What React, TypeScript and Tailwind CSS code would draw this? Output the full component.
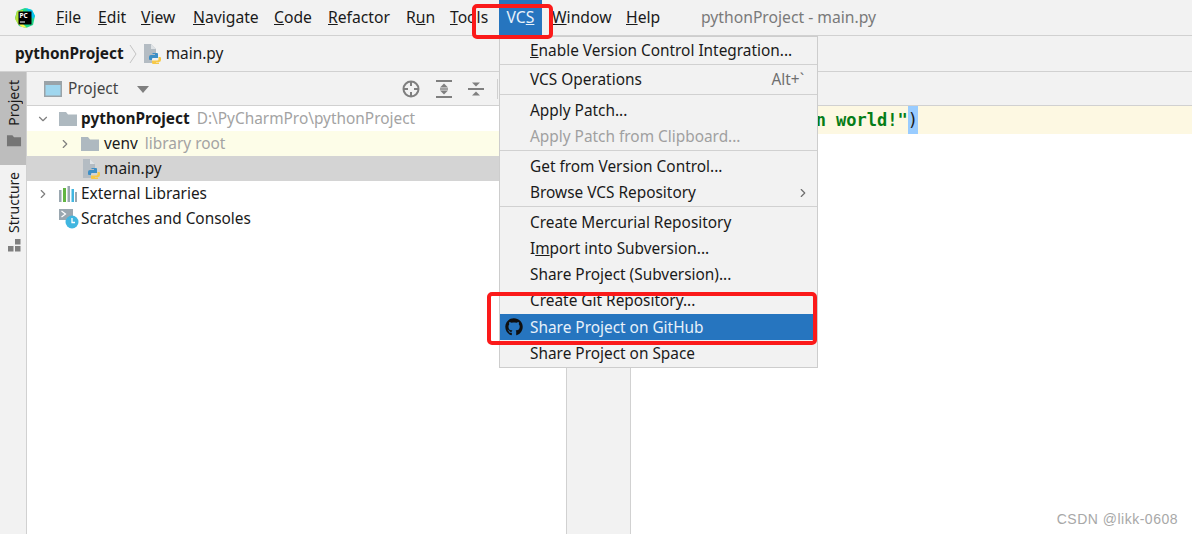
import { ChevronDown, ChevronRight } from "lucide-react";
import { FaGithub } from "react-icons/fa";

const FONT = "font-['Noto_Sans','Open_Sans',sans-serif]";

function FolderIcon({ className = "", fill = "#aeb9c0" }: { className?: string; fill?: string }) {
  return (
    <svg width="18" height="15" viewBox="0 0 18 15" className={className}>
      <path d="M0 1h7l2 2.500h9V15H0z" fill={fill} />
    </svg>
  );
}

function PyFileIcon() {
  return (
    <svg width="18" height="20" viewBox="0 0 18 20">
      <path d="M0 0h7l5 5v6H8v8H0z" fill="#b4bcc3" />
      <path d="M7 0v5h5z" fill="#dfe3e6" />
      <path d="M9 9h4a1 1 0 0 1 1 1v4H9a1 1 0 0 0-1 1v1H6a1 1 0 0 1-1-1v-2a2 2 0 0 1 2-2h4v-1H8z" fill="#3d8fc6" />
      <path d="M14.500 13h1.500a1 1 0 0 1 1 1v2a2 2 0 0 1-2 2h-3v.500h3V20H9a1 1 0 0 1-1-1v-2.500h5a1.500 1.500 0 0 0 1.500-1.500z" fill="#f7c948" />
    </svg>
  );
}

function PyCharmLogo() {
  return (
    <svg width="22" height="22" viewBox="0 0 22 22">
      <path d="M3 4l8-3 7 2 3 6-2 9-7 3-7-2-4-8z" fill="#21d789" />
      <path d="M1 12l2-8 6-1-1 16-4-2z" fill="#b4e33d" />
      <path d="M12 1l6 2 3 6-2 3z" fill="#07c3f2" />
      <path d="M4 17l4 3 5 1-5-5z" fill="#fcf84a" />
      <rect x="4.500" y="4.500" width="13" height="13" fill="#000" />
      <text x="5.500" y="11" fontSize="6.500" fontWeight="700" fill="#fff" fontFamily="Noto Sans, sans-serif">PC</text>
      <rect x="6" y="14.500" width="5" height="1" fill="#fff" />
    </svg>
  );
}

function ProjectWindowIcon() {
  return (
    <svg width="18" height="16" viewBox="0 0 18 16">
      <rect x="0" y="0" width="18" height="16" fill="#9aa3a8" />
      <rect x="1.500" y="4" width="15" height="10.500" fill="#9fd6ee" />
    </svg>
  );
}

function LocateIcon() {
  return (
    <svg width="18" height="18" viewBox="0 0 18 18" fill="none" stroke="#7f7f7f" strokeWidth="2">
      <circle cx="9" cy="9" r="7.500" />
      <path d="M9 1v5M9 12v5M1 9h5M12 9h5" />
    </svg>
  );
}

function ExpandIcon() {
  return (
    <svg width="16" height="18" viewBox="0 0 16 18" fill="#7f7f7f">
      <rect x="0" y="0" width="16" height="2" />
      <rect x="0" y="16" width="16" height="2" />
      <path d="M8 3.500l4 4H4zM8 14.500l-4-4h8z" />
      <rect x="4" y="8.300" width="8" height="1.400" />
    </svg>
  );
}

function CollapseIcon() {
  return (
    <svg width="16" height="18" viewBox="0 0 16 18" fill="#7f7f7f">
      <rect x="0" y="8" width="16" height="2" />
      <path d="M8 6.500l-4-4h8zM8 11.500l4 4H4z" />
    </svg>
  );
}

function LibrariesIcon() {
  return (
    <svg width="18" height="16" viewBox="0 0 18 16">
      <rect x="0" y="4" width="2.500" height="12" fill="#9aa7b0" />
      <rect x="4" y="2" width="3" height="14" fill="#62b543" />
      <rect x="8.500" y="0" width="2.500" height="16" fill="#9aa7b0" />
      <rect x="12.500" y="3" width="2.500" height="13" fill="#40b6e0" />
      <rect x="16" y="6" width="2" height="10" fill="#9aa7b0" />
    </svg>
  );
}

function ScratchesIcon() {
  return (
    <svg width="20" height="20" viewBox="0 0 20 20">
      <rect x="0" y="0" width="14" height="11" fill="#9aa7b0" />
      <path d="M2.500 2l4 3-4 3" fill="none" stroke="#fff" strokeWidth="1.200" />
      <circle cx="13" cy="13" r="6.500" fill="#40b6e0" />
      <path d="M13 9v4.500h3" fill="none" stroke="#fff" strokeWidth="1.300" />
    </svg>
  );
}

const MENU_BAR = [
  { pre: "", key: "F", post: "ile", w: "w-[42px]" },
  { pre: "", key: "E", post: "dit", w: "w-[43px]" },
  { pre: "", key: "V", post: "iew", w: "w-[52px]" },
  { pre: "", key: "N", post: "avigate", w: "w-[81px]" },
  { pre: "", key: "C", post: "ode", w: "w-[54px]" },
  { pre: "", key: "R", post: "efactor", w: "w-[78px]" },
  { pre: "R", key: "u", post: "n", w: "w-[44px]" },
  { pre: "", key: "T", post: "ools", w: "w-[49px]" },
];

type Item = { pre?: string; key?: string; post: string; muted?: boolean; shortcut?: string; arrow?: boolean; active?: boolean; h?: string };

const MENU_GROUPS: { cls: string; items: Item[] }[] = [
  { cls: "", items: [{ key: "E", post: "nable Version Control Integration..." }] },
  { cls: "pt-[2px] border-t", items: [{ post: "VCS Operations", shortcut: "Alt+`" }] },
  {
    cls: "mt-[1px] pt-[3px] border-t",
    items: [{ post: "Apply Patch..." }, { post: "Apply Patch from Clipboard...", muted: true }],
  },
  {
    cls: "pt-[2px] border-t",
    items: [{ post: "Get from Version Control...", h: "h-[27px]" }, { post: "Browse VCS Repository", arrow: true }],
  },
  {
    cls: "pt-[3px] border-t",
    items: [
      { post: "Create Mercurial Repository" },
      { pre: "I", key: "m", post: "port into Subversion..." },
      { post: "Share Project (Subversion)..." },
      { post: "Create Git Repository..." },
      { post: "Share Project on GitHub", active: true, h: "h-[26px] pt-[2px]" },
      { post: "Share Project on Space", h: "h-[26px] pt-[2px]" },
    ],
  },
];

function VcsMenu() {
  return (
    <div className="absolute left-[499px] top-[36px] z-10 w-[319px] h-[332px] pt-[1px] bg-[#f2f2f2] border border-[#cdcdcd] text-[15.400px] text-[#1a1a1a]">
      {MENU_GROUPS.map((group, g) => (
        <div key={g} className={`border-[#d1d1d1] ${group.cls}`}>
          {group.items.map((it) => (
            <div
              key={it.post}
              className={`relative ${it.h ?? "h-[26px]"} flex items-center justify-between pl-[30px] pr-[7px] leading-none ${
                it.active ? "bg-[#2675bf] text-[#e8f1fa]" : it.muted ? "text-[#a0a0a0]" : ""
              }`}
            >
              {it.active && <FaGithub className="absolute left-[5px] top-[4px] text-[#0f0f0f]" size={18} />}
              <span>
                {it.pre}
                {it.key && <span className="underline">{it.key}</span>}
                {it.post}
              </span>
              {it.shortcut && <span className="text-[#6e6e6e] pr-[6px]">{it.shortcut}</span>}
              {it.arrow && <ChevronRight size={14} className="text-[#6e6e6e]" />}
            </div>
          ))}
        </div>
      ))}
    </div>
  );
}

export default function App() {
  return (
    <div className={`relative w-[1192px] h-[534px] overflow-hidden bg-white flex flex-col ${FONT} text-[15.400px] text-[#1a1a1a]`}>
      {/* Title bar */}
      <div className="h-[36px] shrink-0 bg-[#f2f2f2] border-b border-[#d1d1d1] flex items-center text-[15.700px]">
        <div className="w-[56px] pl-[14px] flex items-center">
          <PyCharmLogo />
        </div>
        {MENU_BAR.map((m) => (
          <div key={m.post} className={m.w}>
            {m.pre}
            <span className="underline">{m.key}</span>
            {m.post}
          </div>
        ))}
        <div className="w-[43px] h-[36px] bg-[#2675bf] text-[#e8f1fa] flex items-center justify-center">
          VC<span className="underline">S</span>
        </div>
        <div className="ml-[10px] w-[74px]">
          <span className="underline">W</span>indow
        </div>
        <div className="w-[75px]">
          <span className="underline">H</span>elp
        </div>
        <div className="text-[#7a7a7a]">pythonProject - main.py</div>
      </div>

      {/* Breadcrumb bar */}
      <div className="h-[36px] shrink-0 bg-[#f2f2f2] border-b border-[#d1d1d1] flex items-center pl-[15px]">
        <span className="font-bold">pythonProject</span>
        <svg width="8" height="20" viewBox="0 0 8 20" fill="none" stroke="#c4c4c4" className="ml-[5px] mr-[7px]">
          <path d="M1 1l6 9-6 9" />
        </svg>
        <PyFileIcon />
        <span className="ml-[4px]">main.py</span>
      </div>

      <div className="flex-1 flex min-h-0">
        {/* Tool window strip */}
        <div className="w-[27px] shrink-0 bg-[#f2f2f2] border-r border-[#d1d1d1] flex flex-col">
          <div className="h-[93px] bg-[#bdbdbd] flex flex-col items-center pt-[8px] pl-[2px]">
            <span className="[writing-mode:vertical-rl] rotate-180 text-[14px] leading-none">Project</span>
            <FolderIcon className="mt-[7px] scale-[0.8]" fill="#757575" />
          </div>
          <div className="flex flex-col items-center pt-[7px] pl-[2px]">
            <span className="[writing-mode:vertical-rl] rotate-180 text-[14px] leading-none">Structure</span>
            <svg width="13" height="13" viewBox="0 0 13 13" fill="#7f7f7f" className="mt-[6px]">
              <rect x="7" y="0" width="5.500" height="5.500" />
              <rect x="0" y="7" width="5.500" height="5.500" />
              <rect x="7" y="7" width="5.500" height="5.500" />
            </svg>
          </div>
        </div>

        {/* Project panel */}
        <div className="w-[539px] shrink-0 flex flex-col">
          <div className="h-[34px] shrink-0 pt-[1px] bg-[#f2f2f2] border-b border-[#d1d1d1] flex items-center pl-[17px]">
            <ProjectWindowIcon />
            <span className="ml-[6px] text-[#444]">Project</span>
            <svg width="12" height="7" viewBox="0 0 12 7" fill="#7f7f7f" className="ml-[19px]">
              <path d="M0 0h12L6 7z" />
            </svg>
            <div className="ml-[253px] flex items-center gap-[16px]">
              <LocateIcon />
              <ExpandIcon />
              <CollapseIcon />
            </div>
            <div className="ml-[13px] h-[20px] w-px bg-[#cfcfcf]" />
          </div>
          <div className="h-[25px] flex items-center pl-[9px]">
            <ChevronDown size={14} className="text-[#7f7f7f]" />
            <FolderIcon className="ml-[9px]" />
            <span className="ml-[4px] font-bold">pythonProject</span>
            <span className="ml-[7px] text-[#a3a3a3]">D:\PyCharmPro\pythonProject</span>
          </div>
          <div className="h-[25px] flex items-center pl-[31px] bg-[#fdfde8]">
            <ChevronRight size={14} className="text-[#7f7f7f]" />
            <FolderIcon className="ml-[9px]" />
            <span className="ml-[5px]">venv</span>
            <span className="ml-[7px] text-[#a3a3a3]">library root</span>
          </div>
          <div className="h-[25px] flex items-center pl-[56px] bg-[#d4d4d4]">
            <PyFileIcon />
            <span className="ml-[3px]">main.py</span>
          </div>
          <div className="h-[25px] flex items-center pl-[9px]">
            <ChevronRight size={14} className="text-[#7f7f7f]" />
            <span className="ml-[9px]">
              <LibrariesIcon />
            </span>
            <span className="ml-[4px]">External Libraries</span>
          </div>
          <div className="h-[25px] flex items-center pl-[32px]">
            <ScratchesIcon />
            <span className="ml-[2px]">Scratches and Consoles</span>
          </div>
        </div>

        {/* Gutter */}
        <div className="w-[65px] shrink-0 bg-[#f2f2f2] border-x border-[#d1d1d1]" />

        {/* Editor */}
        <div className="flex-1 flex flex-col min-w-0">
          <div className="h-[34px] shrink-0 bg-[#f2f2f2] border-b border-[#d1d1d1]" />
          <div className="h-[28px] bg-[#fdf8e2] flex items-center justify-end pr-[274px] font-['DejaVu_Sans_Mono',monospace] text-[17px] font-bold text-[#067d17] whitespace-nowrap">
            <span className="pt-[1px]">n world!"</span>
            <span className="h-[28px] leading-[28px] bg-[#99ccff] text-[#1a1a1a] font-normal">)</span>
          </div>
        </div>
      </div>

      <VcsMenu />

      {/* Red annotations */}
      <div className="absolute left-[472px] top-[4px] z-20 w-[81px] h-[35px] rounded-[5px] border-[4px] border-[#fb1a1a]" />
      <div className="absolute left-[487px] top-[292px] z-20 w-[330px] h-[53px] rounded-[5px] border-[4px] border-[#fb1a1a]" />

      <div className="absolute right-[14px] bottom-[4px] z-20 font-['Liberation_Sans',sans-serif] text-[14px] text-[#a8a8a8] tracking-[0.5px]">
        CSDN @likk-0608
      </div>
    </div>
  );
}
